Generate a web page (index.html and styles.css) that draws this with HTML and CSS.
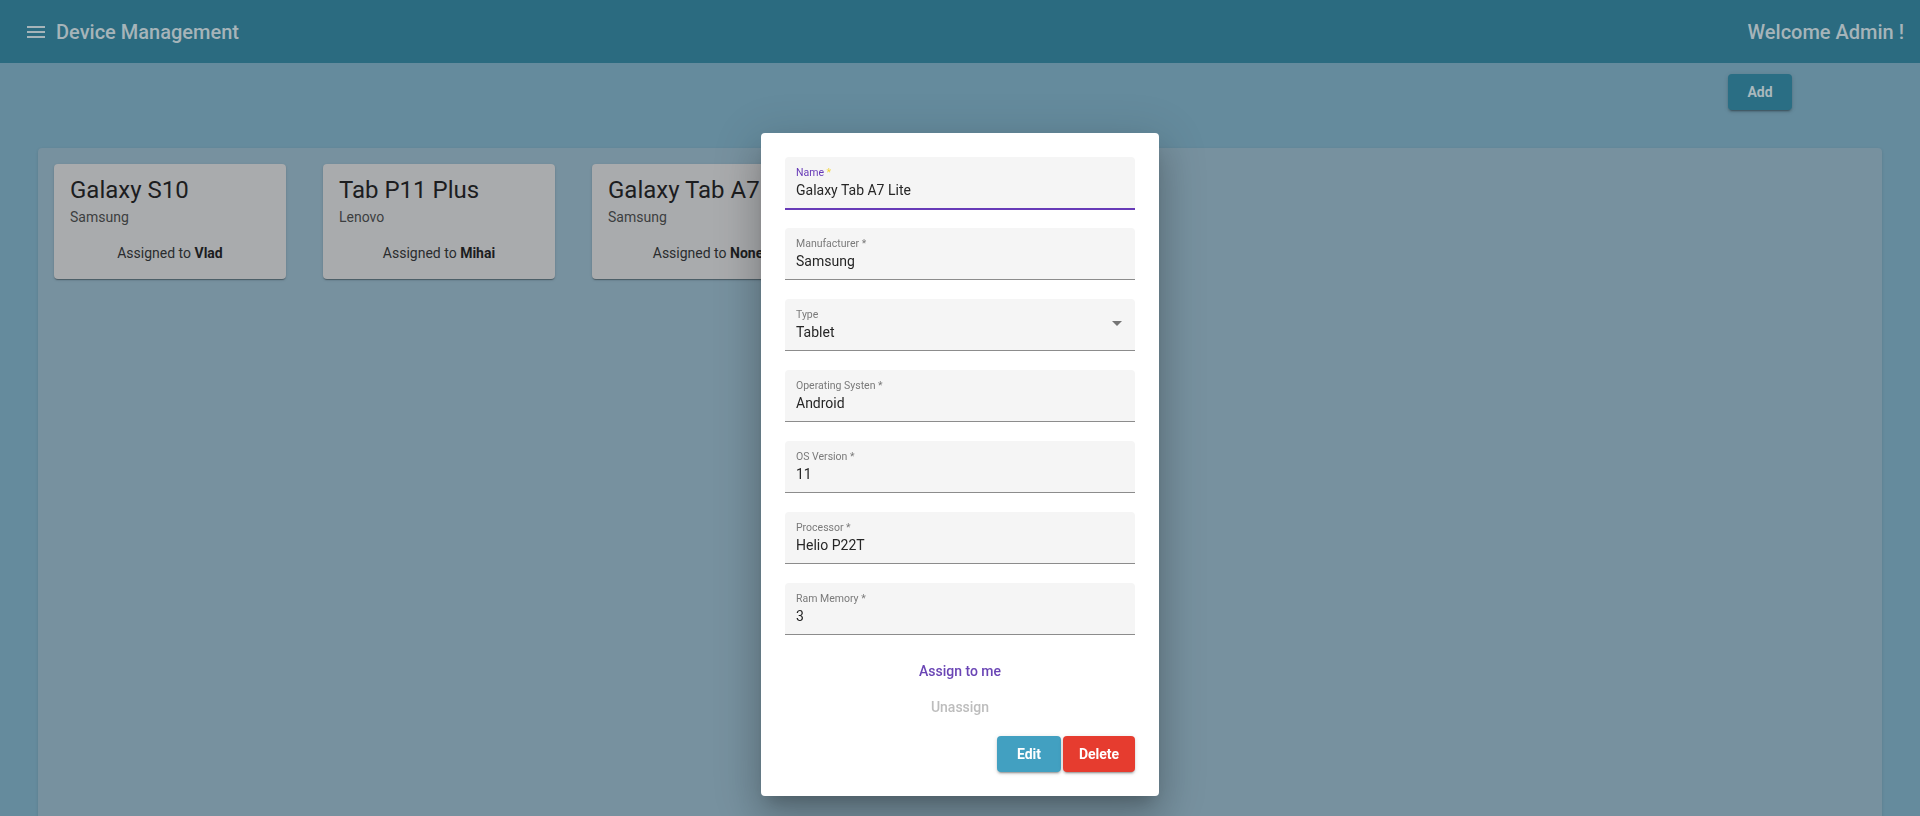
FILE: index.html
```html
<!DOCTYPE html>
<html lang="en">
<head>
<meta charset="utf-8">
<title>Device Management</title>
<link rel="stylesheet" href="styles.css">
</head>
<body>
<header class="toolbar">
  <div class="toolbar-left">
    <svg class="menu-icon" viewBox="0 0 24 24" width="24" height="24"><path d="M3 18h18v-2H3v2zm0-5h18v-2H3v2zm0-7v2h18V6H3z"/></svg>
    <span class="app-title">Device Management</span>
  </div>
  <span class="welcome">Welcome Admin !</span>
</header>

<div class="actions">
  <button class="btn-add">Add</button>
</div>

<main class="device-panel">
  <div class="card">
    <div class="card-title">Galaxy S10</div>
    <div class="card-sub">Samsung</div>
    <div class="card-assign">Assigned to <b>Vlad</b></div>
  </div>
  <div class="card">
    <div class="card-title">Tab P11 Plus</div>
    <div class="card-sub">Lenovo</div>
    <div class="card-assign">Assigned to <b>Mihai</b></div>
  </div>
  <div class="card">
    <div class="card-title">Galaxy Tab A7 Lite</div>
    <div class="card-sub">Samsung</div>
    <div class="card-assign">Assigned to <b>None</b></div>
  </div>
</main>

<div class="overlay">
  <div class="dialog">
    <div class="field focused">
      <span class="label">Name <span class="req">*</span></span>
      <span class="value">Galaxy Tab A7 Lite</span>
    </div>
    <div class="field">
      <span class="label">Manufacturer *</span>
      <span class="value">Samsung</span>
    </div>
    <div class="field select">
      <span class="label">Type</span>
      <span class="value">Tablet</span>
      <span class="arrow"></span>
    </div>
    <div class="field">
      <span class="label">Operating Systen *</span>
      <span class="value">Android</span>
    </div>
    <div class="field">
      <span class="label">OS Version *</span>
      <span class="value">11</span>
    </div>
    <div class="field">
      <span class="label">Processor *</span>
      <span class="value">Helio P22T</span>
    </div>
    <div class="field">
      <span class="label">Ram Memory *</span>
      <span class="value">3</span>
    </div>
    <button class="text-btn assign">Assign to me</button>
    <button class="text-btn unassign" disabled>Unassign</button>
    <div class="dialog-actions">
      <button class="btn btn-edit">Edit</button>
      <button class="btn btn-delete">Delete</button>
    </div>
  </div>
</div>
</body>
</html>
```
FILE: styles.css
```css
* { box-sizing: border-box; }
html, body { height: 100%; }
body {
  margin: 0;
  font-family: Roboto, "Noto Sans", "Liberation Sans", sans-serif;
  background: #658b9d;
  overflow: hidden;
}
.toolbar {
  height: 63px;
  background: #2b6b80;
  display: flex;
  align-items: center;
  justify-content: space-between;
  padding: 0 16px 0 24px;
  color: #a6b4b9;
  font-size: 20px;
  font-weight: 500;
}
.toolbar-left { display: flex; align-items: center; }
.menu-icon { fill: #a6b4b9; margin-right: 8px; }
.actions {
  display: flex;
  justify-content: flex-end;
  height: 148px;
  margin-top: -63px;
  padding: 74px 128px 0 0;
}
.btn-add {
  width: 64px;
  height: 36px;
  border: 0;
  border-radius: 4px;
  background: #2a6e84;
  color: #a9b8bd;
  font: 700 14px Roboto, sans-serif;
  box-shadow: 0 3px 1px -2px rgba(0,0,0,.2), 0 2px 2px 0 rgba(0,0,0,.14), 0 1px 5px 0 rgba(0,0,0,.12);
}
.device-panel {
  margin: 0 38px;
  height: 700px;
  background: #77919f;
  border-radius: 4px;
  padding: 16px;
  display: flex;
  gap: 37px;
  align-items: flex-start;
  box-shadow: 0 1px 3px rgba(0,0,0,.12);
}
.card {
  width: 232px;
  height: 115px;
  flex: none;
  background: #a9abad;
  border-radius: 4px;
  padding: 14px 16px 0;
  color: #1c1d1f;
  box-shadow: 0 2px 1px -1px rgba(0,0,0,.2), 0 1px 1px 0 rgba(0,0,0,.14), 0 1px 3px 0 rgba(0,0,0,.12);
  white-space: nowrap;
  overflow: hidden;
}
.card-title { font-size: 24px; line-height: 24px; font-weight: 400; }
.card-sub { font-size: 14px; line-height: 20px; margin-top: 5px; color: #3c3e40; }
.card-assign { font-size: 14px; line-height: 20px; margin-top: 16px; text-align: center; color: #2a2c2e; }
.card-assign b { font-weight: 700; color: #1c1d1f; }

.overlay {
  position: fixed;
  inset: 0;
  display: flex;
  justify-content: center;
  align-items: flex-start;
  padding-top: 133px;
}
.dialog {
  width: 398px;
  background: #fff;
  border-radius: 4px;
  padding: 24px;
  display: flex;
  flex-direction: column;
  box-shadow: 0 11px 15px -7px rgba(0,0,0,.2), 0 24px 38px 3px rgba(0,0,0,.14), 0 9px 46px 8px rgba(0,0,0,.12);
}
.field {
  position: relative;
  height: 52px;
  background: #f5f5f5;
  border-radius: 4px 4px 0 0;
  border-bottom: 1px solid #8c8c8c;
  padding: 10px 11px 0;
  margin-bottom: 19px;
  display: flex;
  flex-direction: column;
}
.field.focused::after {
  content: "";
  position: absolute;
  left: 0; right: 0; bottom: -2px;
  height: 2px;
  background: #673ab7;
}
.label {
  font-size: 10.5px;
  line-height: 12px;
  color: #7a7a7a;
}
.focused .label { color: #673ab7; }
.req { color: #f2d63a; }
.value {
  margin-top: 2px;
  font-size: 14px;
  line-height: 18px;
  color: #262626;
}
.arrow {
  position: absolute;
  right: 13px;
  top: 22px;
  width: 0; height: 0;
  border-left: 5px solid transparent;
  border-right: 5px solid transparent;
  border-top: 5px solid #757575;
}
.text-btn {
  align-self: center;
  height: 36px;
  padding: 0 16px;
  border: 0;
  background: transparent;
  font: 500 14px Roboto, sans-serif;
}
.assign { color: #6a45b5; margin-top: -1px; }
.unassign { color: #bdbdbd; }
.dialog-actions {
  display: flex;
  justify-content: flex-end;
  gap: 2px;
  margin-top: 11px;
}
.btn {
  height: 36px;
  border: 0;
  border-radius: 4px;
  color: #fff;
  font: 700 14px Roboto, sans-serif;
  box-shadow: 0 3px 1px -2px rgba(0,0,0,.2), 0 2px 2px 0 rgba(0,0,0,.14), 0 1px 5px 0 rgba(0,0,0,.12);
}
.btn-edit { width: 64px; background: #42a0c1; }
.btn-delete { width: 72px; background: #e63c2f; }
```
